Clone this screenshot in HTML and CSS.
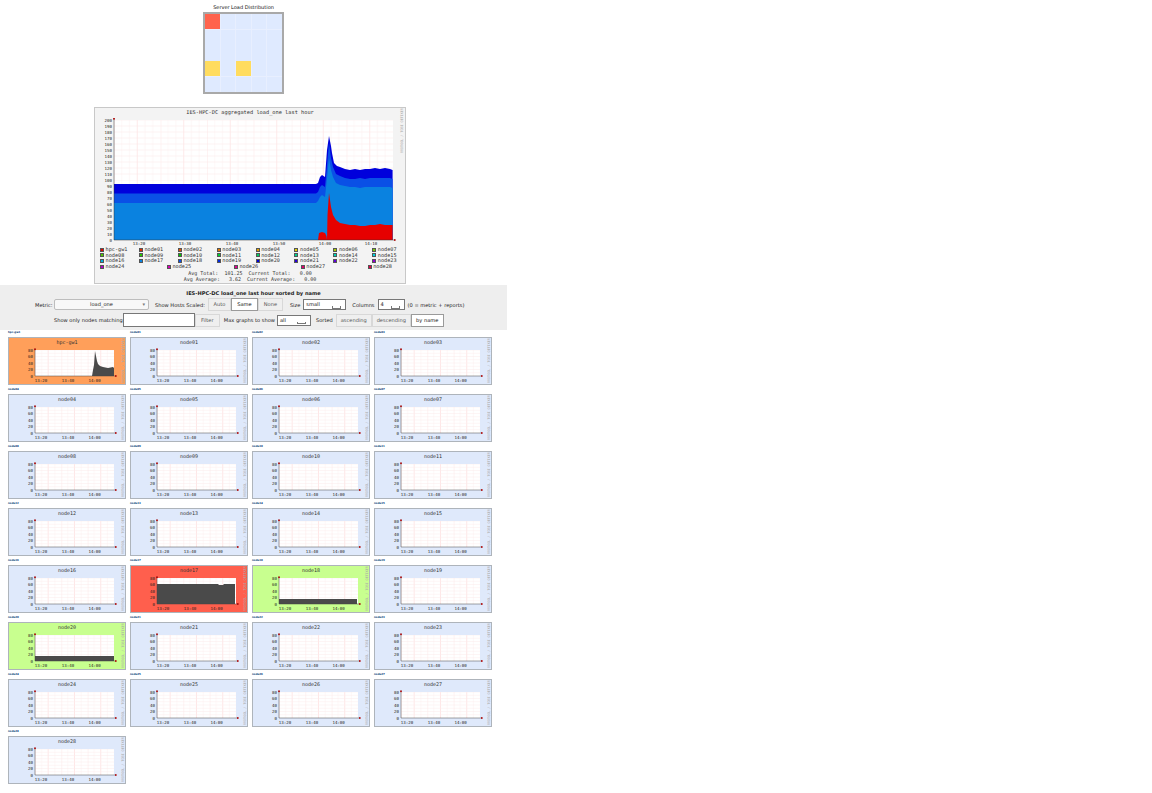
FILE: index.html
```html
<!DOCTYPE html>
<html lang="en">
<head>
    <meta charset="UTF-8">
    <meta name="viewport" content="width=device-width, initial-scale=1.0">
    <title>IES-HPC-DC Cluster Report</title>
    <link rel="stylesheet" href="styles.css">
</head>
<body>
    <svg class="defs" width="0" height="0">
        <defs>
            <pattern id="bigGrid" x="114" y="120" width="46.5" height="60" patternUnits="userSpaceOnUse">
                <path d="M0 0V60M7.75 0V60M15.5 0V60M23.25 0V60M31 0V60M38.75 0V60" stroke="#fbeeee" stroke-width="0.5"/>
                <path d="M0 0V60M23.25 0V60" stroke="#ffdcdc" stroke-width="0.5"/>
                <path d="M0 0H46.5M0 6H46.5M0 12H46.5M0 18H46.5M0 24H46.5M0 30H46.5M0 36H46.5M0 42H46.5M0 48H46.5M0 54H46.5" stroke="#fce8e8" stroke-width="0.5"/>
            </pattern>
            <pattern id="smallGrid" x="27" y="13" width="26.3" height="26" patternUnits="userSpaceOnUse">
                <path d="M0 0V26M6.6 0V26M13.2 0V26M19.8 0V26" stroke="#fbf0f0" stroke-width="0.5"/>
                <path d="M0 0V26M13.2 0V26" stroke="#ffd6d6" stroke-width="0.5"/>
                <path d="M0 0H27M0 3.25H27M0 6.5H27M0 9.75H27M0 13H27M0 16.25H27M0 19.5H27M0 22.75H27" stroke="#fcecec" stroke-width="0.5"/>
            </pattern>
            <g id="smallPlot">
                <rect x="27" y="13" width="79" height="26" fill="#fff"/>
                <rect x="27" y="13" width="79" height="26" fill="url(#smallGrid)"/>
                <text class="tick" x="25" y="14.5" text-anchor="end">80</text>
                <text class="tick" x="25" y="21" text-anchor="end">60</text>
                <text class="tick" x="25" y="27.5" text-anchor="end">40</text>
                <text class="tick" x="25" y="34" text-anchor="end">20</text>
                <text class="tick" x="25" y="40.5" text-anchor="end">0</text>
                <text class="tick" x="33" y="44.5" text-anchor="middle">13:20</text>
                <text class="tick" x="60" y="44.5" text-anchor="middle">13:40</text>
                <text class="tick" x="86.6" y="44.5" text-anchor="middle">14:00</text>
                <text class="side" transform="translate(115.5 46) rotate(-90)">RRDTOOL / TOBI OETIKER</text>
            </g>
            <g id="smallAxes">
                <path d="M27 39H108M27 39V11.5" stroke="#444" stroke-width="0.5" fill="none"/>
                <rect x="26.2" y="11.5" width="1.6" height="1.6" fill="#b00000"/>
                <rect x="107" y="38.2" width="1.6" height="1.6" fill="#b00000"/>
            </g>
        </defs>
    </svg>

    <div class="page">
        <div class="heat-wrap">
            <div class="heat-title">Server Load Distribution</div>
            <div class="heatmap">
                <div class="cell crit"></div><div class="cell"></div><div class="cell"></div><div class="cell"></div><div class="cell"></div>
                <div class="cell"></div><div class="cell"></div><div class="cell"></div><div class="cell"></div><div class="cell"></div>
                <div class="cell"></div><div class="cell"></div><div class="cell"></div><div class="cell"></div><div class="cell"></div>
                <div class="cell warn"></div><div class="cell"></div><div class="cell warn"></div><div class="cell"></div><div class="cell"></div>
                <div class="cell"></div><div class="cell"></div><div class="cell"></div><div class="cell"></div><div class="cell"></div>
            </div>
        </div>

        <div class="big-graph">
            <svg class="big-plot" width="310" height="139" viewBox="95 108 310 139">
                <text class="big-title" x="250" y="113.5" text-anchor="middle">IES-HPC-DC aggregated load_one last hour</text>
                <rect x="114" y="120" width="279" height="120" fill="#fff"/>
                <rect x="114" y="120" width="279" height="120" fill="url(#bigGrid)"/>

                <text class="tick" x="112" y="121.5" text-anchor="end">200</text>
                <text class="tick" x="112" y="127.5" text-anchor="end">190</text>
                <text class="tick" x="112" y="133.5" text-anchor="end">180</text>
                <text class="tick" x="112" y="139.5" text-anchor="end">170</text>
                <text class="tick" x="112" y="145.5" text-anchor="end">160</text>
                <text class="tick" x="112" y="151.5" text-anchor="end">150</text>
                <text class="tick" x="112" y="157.5" text-anchor="end">140</text>
                <text class="tick" x="112" y="163.5" text-anchor="end">130</text>
                <text class="tick" x="112" y="169.5" text-anchor="end">120</text>
                <text class="tick" x="112" y="175.5" text-anchor="end">110</text>
                <text class="tick" x="112" y="181.5" text-anchor="end">100</text>
                <text class="tick" x="112" y="187.5" text-anchor="end">90</text>
                <text class="tick" x="112" y="193.5" text-anchor="end">80</text>
                <text class="tick" x="112" y="199.5" text-anchor="end">70</text>
                <text class="tick" x="112" y="205.5" text-anchor="end">60</text>
                <text class="tick" x="112" y="211.5" text-anchor="end">50</text>
                <text class="tick" x="112" y="217.5" text-anchor="end">40</text>
                <text class="tick" x="112" y="223.5" text-anchor="end">30</text>
                <text class="tick" x="112" y="229.5" text-anchor="end">20</text>
                <text class="tick" x="112" y="235.5" text-anchor="end">10</text>
                <text class="tick" x="112" y="241.5" text-anchor="end">0</text>

                <polygon fill="#0000dc" points="114,240 114,184 316,184 318,183 320,177 322,175 325,177 327,150 329,136 331,146 332,153 334,163 337,166 340,167 345,169 350,170 355,169 360,170 365,169 370,169 375,168 380,169 385,168 390,169 392.6,170 392.6,240"/>
                <polygon fill="#0a50e6" points="114,240 114,193.5 316,193.5 318,192 320,187 322,185 325,187 327,165 329,143 331,158 333,167 336,174 340,176 345,178 350,179 355,179 360,178 365,179 370,178 375,178 380,178 385,178 390,178 392.6,179 392.6,240"/>
                <polygon fill="#0a82e0" points="114,240 114,203 316,203 318,201 320,197 322,195 325,197 327,178 329,158 331,170 333,177 336,183 340,185 345,186 350,187 355,187 360,188 365,187 370,187 375,187 380,187 385,187 390,187 392.6,188 392.6,240"/>
                <polygon fill="#e60000" points="318,240 319,233 322,232 325,233 326.5,236 327,240 327.5,215 329,193 331,207 333,215 336,220 340,223 345,224 350,225 355,225 360,226 365,226 370,225 375,225 380,224 385,225 390,225 392.6,225 392.6,240"/>

                <path d="M114 240H395M114 240V118" stroke="#333" stroke-width="0.5" fill="none"/>
                <rect x="113.2" y="118" width="1.6" height="1.6" fill="#b00000"/>
                <rect x="394" y="239.2" width="1.6" height="1.6" fill="#b00000"/>

                <text class="tick" x="139" y="245" text-anchor="middle">13:20</text>
                <text class="tick" x="185" y="245" text-anchor="middle">13:30</text>
                <text class="tick" x="232" y="245" text-anchor="middle">13:40</text>
                <text class="tick" x="279" y="245" text-anchor="middle">13:50</text>
                <text class="tick" x="325" y="245" text-anchor="middle">14:00</text>
                <text class="tick" x="371" y="245" text-anchor="middle">14:10</text>
                <text class="side" transform="translate(403 153) rotate(-90)">RRDTOOL / TOBI OETIKER</text>
            </svg>

            <div class="legend">
                <span class="key"><i style="background:#e60000"></i>hpc-gw1</span>
                <span class="key"><i style="background:#e02a00"></i>node01</span>
                <span class="key"><i style="background:#e05000"></i>node02</span>
                <span class="key"><i style="background:#e07800"></i>node03</span>
                <span class="key"><i style="background:#e0a000"></i>node04</span>
                <span class="key"><i style="background:#e0d000"></i>node05</span>
                <span class="key"><i style="background:#a8d000"></i>node06</span>
                <span class="key"><i style="background:#78c800"></i>node07</span>
                <span class="key"><i style="background:#50c800"></i>node08</span>
                <span class="key"><i style="background:#28c800"></i>node09</span>
                <span class="key"><i style="background:#00c800"></i>node10</span>
                <span class="key"><i style="background:#00d030"></i>node11</span>
                <span class="key"><i style="background:#00d060"></i>node12</span>
                <span class="key"><i style="background:#00d090"></i>node13</span>
                <span class="key"><i style="background:#00d0b8"></i>node14</span>
                <span class="key"><i style="background:#00d0e0"></i>node15</span>
                <span class="key"><i style="background:#00b0e0"></i>node16</span>
                <span class="key"><i style="background:#0a82e0"></i>node17</span>
                <span class="key"><i style="background:#0a50e6"></i>node18</span>
                <span class="key"><i style="background:#0028e0"></i>node19</span>
                <span class="key"><i style="background:#0000dc"></i>node20</span>
                <span class="key"><i style="background:#2800dc"></i>node21</span>
                <span class="key"><i style="background:#6000dc"></i>node22</span>
                <span class="key"><i style="background:#9000d0"></i>node23</span>
            </div>
            <div class="legend-last">
                <span class="key"><i style="background:#b000c8"></i>node24</span>
                <span class="key"><i style="background:#d800b8"></i>node25</span>
                <span class="key"><i style="background:#e00090"></i>node26</span>
                <span class="key"><i style="background:#e00070"></i>node27</span>
                <span class="key"><i style="background:#e00048"></i>node28</span>
            </div>
            <div class="totals">Avg Total:  101.25  Current Total:   0.00
Avg Average:   3.62  Current Average:   0.00</div>
        </div>

        <div class="filter">
            <div class="filter-title">IES-HPC-DC load_one last hour sorted by name</div>
            <div class="filter-row row-top">
                <label class="metric-label">Metric:</label>
                <div class="metric-select">load_one<span class="arrow">▾</span></div>
                <label>Show Hosts Scaled:</label>
                <div class="btns">
                    <span class="btn btn-auto">Auto</span><span class="btn btn-same on">Same</span><span class="btn btn-none">None</span>
                </div>
                <label class="size-label">Size</label>
                <div class="pick size-pick">small</div>
                <label class="cols-label">Columns</label>
                <div class="pick cols-pick">4</div>
                <span class="hint">(0 = metric + reports)</span>
            </div>
            <div class="filter-row row-bottom">
                <label>Show only nodes matching</label>
                <div class="match-input"></div>
                <span class="btn filter-btn">Filter</span>
                <label class="max-label">Max graphs to show</label>
                <div class="pick max-pick">all</div>
                <label class="sorted-label">Sorted</label>
                <div class="btns sort-btns">
                    <span class="btn btn-asc">ascending</span><span class="btn btn-desc">descending</span><span class="btn btn-name on">by name</span>
                </div>
            </div>
        </div>

        <div class="hosts">
            <div class="host"><span class="stamp">hpc-gw1</span><div class="card down"><h4>hpc-gw1</h4><svg class="chart" viewBox="1 1 116 46"><use href="#smallPlot"/><polygon class="area" points="84,39 85,33 86,28 87,14 88,19 89,24 90,27 92,29 95,30 100,31 105,30 106,31 106,39"/><use href="#smallAxes"/></svg></div></div>
            <div class="host"><span class="stamp">node01</span><div class="card"><h4>node01</h4><svg class="chart" viewBox="1 1 116 46"><use href="#smallPlot"/><use href="#smallAxes"/></svg></div></div>
            <div class="host"><span class="stamp">node02</span><div class="card"><h4>node02</h4><svg class="chart" viewBox="1 1 116 46"><use href="#smallPlot"/><use href="#smallAxes"/></svg></div></div>
            <div class="host"><span class="stamp">node03</span><div class="card"><h4>node03</h4><svg class="chart" viewBox="1 1 116 46"><use href="#smallPlot"/><use href="#smallAxes"/></svg></div></div>
            <div class="host"><span class="stamp">node04</span><div class="card"><h4>node04</h4><svg class="chart" viewBox="1 1 116 46"><use href="#smallPlot"/><use href="#smallAxes"/></svg></div></div>
            <div class="host"><span class="stamp">node05</span><div class="card"><h4>node05</h4><svg class="chart" viewBox="1 1 116 46"><use href="#smallPlot"/><use href="#smallAxes"/></svg></div></div>
            <div class="host"><span class="stamp">node06</span><div class="card"><h4>node06</h4><svg class="chart" viewBox="1 1 116 46"><use href="#smallPlot"/><use href="#smallAxes"/></svg></div></div>
            <div class="host"><span class="stamp">node07</span><div class="card"><h4>node07</h4><svg class="chart" viewBox="1 1 116 46"><use href="#smallPlot"/><use href="#smallAxes"/></svg></div></div>
            <div class="host"><span class="stamp">node08</span><div class="card"><h4>node08</h4><svg class="chart" viewBox="1 1 116 46"><use href="#smallPlot"/><use href="#smallAxes"/></svg></div></div>
            <div class="host"><span class="stamp">node09</span><div class="card"><h4>node09</h4><svg class="chart" viewBox="1 1 116 46"><use href="#smallPlot"/><use href="#smallAxes"/></svg></div></div>
            <div class="host"><span class="stamp">node10</span><div class="card"><h4>node10</h4><svg class="chart" viewBox="1 1 116 46"><use href="#smallPlot"/><use href="#smallAxes"/></svg></div></div>
            <div class="host"><span class="stamp">node11</span><div class="card"><h4>node11</h4><svg class="chart" viewBox="1 1 116 46"><use href="#smallPlot"/><use href="#smallAxes"/></svg></div></div>
            <div class="host"><span class="stamp">node12</span><div class="card"><h4>node12</h4><svg class="chart" viewBox="1 1 116 46"><use href="#smallPlot"/><use href="#smallAxes"/></svg></div></div>
            <div class="host"><span class="stamp">node13</span><div class="card"><h4>node13</h4><svg class="chart" viewBox="1 1 116 46"><use href="#smallPlot"/><use href="#smallAxes"/></svg></div></div>
            <div class="host"><span class="stamp">node14</span><div class="card"><h4>node14</h4><svg class="chart" viewBox="1 1 116 46"><use href="#smallPlot"/><use href="#smallAxes"/></svg></div></div>
            <div class="host"><span class="stamp">node15</span><div class="card"><h4>node15</h4><svg class="chart" viewBox="1 1 116 46"><use href="#smallPlot"/><use href="#smallAxes"/></svg></div></div>
            <div class="host"><span class="stamp">node16</span><div class="card"><h4>node16</h4><svg class="chart" viewBox="1 1 116 46"><use href="#smallPlot"/><use href="#smallAxes"/></svg></div></div>
            <div class="host"><span class="stamp">node17</span><div class="card crit"><h4>node17</h4><svg class="chart" viewBox="1 1 116 46"><use href="#smallPlot"/><polygon class="area" points="27,39 27,19 88,19 89,20 93,20 94,19 105,19 105,39"/><use href="#smallAxes"/></svg></div></div>
            <div class="host"><span class="stamp">node18</span><div class="card ok"><h4>node18</h4><svg class="chart" viewBox="1 1 116 46"><use href="#smallPlot"/><rect class="area" x="27" y="34" width="78" height="5"/><use href="#smallAxes"/></svg></div></div>
            <div class="host"><span class="stamp">node19</span><div class="card"><h4>node19</h4><svg class="chart" viewBox="1 1 116 46"><use href="#smallPlot"/><use href="#smallAxes"/></svg></div></div>
            <div class="host"><span class="stamp">node20</span><div class="card ok"><h4>node20</h4><svg class="chart" viewBox="1 1 116 46"><use href="#smallPlot"/><rect class="area" x="27" y="34" width="79" height="5"/><use href="#smallAxes"/></svg></div></div>
            <div class="host"><span class="stamp">node21</span><div class="card"><h4>node21</h4><svg class="chart" viewBox="1 1 116 46"><use href="#smallPlot"/><use href="#smallAxes"/></svg></div></div>
            <div class="host"><span class="stamp">node22</span><div class="card"><h4>node22</h4><svg class="chart" viewBox="1 1 116 46"><use href="#smallPlot"/><use href="#smallAxes"/></svg></div></div>
            <div class="host"><span class="stamp">node23</span><div class="card"><h4>node23</h4><svg class="chart" viewBox="1 1 116 46"><use href="#smallPlot"/><use href="#smallAxes"/></svg></div></div>
            <div class="host"><span class="stamp">node24</span><div class="card"><h4>node24</h4><svg class="chart" viewBox="1 1 116 46"><use href="#smallPlot"/><use href="#smallAxes"/></svg></div></div>
            <div class="host"><span class="stamp">node25</span><div class="card"><h4>node25</h4><svg class="chart" viewBox="1 1 116 46"><use href="#smallPlot"/><use href="#smallAxes"/></svg></div></div>
            <div class="host"><span class="stamp">node26</span><div class="card"><h4>node26</h4><svg class="chart" viewBox="1 1 116 46"><use href="#smallPlot"/><use href="#smallAxes"/></svg></div></div>
            <div class="host"><span class="stamp">node27</span><div class="card"><h4>node27</h4><svg class="chart" viewBox="1 1 116 46"><use href="#smallPlot"/><use href="#smallAxes"/></svg></div></div>
            <div class="host"><span class="stamp">node28</span><div class="card"><h4>node28</h4><svg class="chart" viewBox="1 1 116 46"><use href="#smallPlot"/><use href="#smallAxes"/></svg></div></div>
        </div>
    </div>
</body>
</html>
```

FILE: styles.css
```css
body {
    margin: 0;
    background-color: #ffffff;
    font-family: 'DejaVu Sans', Verdana, sans-serif;
    color: #222222;
}

.defs {
    position: absolute;
}

.page {
    width: 507px;
}

/* heatmap */
.heat-wrap {
    margin-left: 203px;
    width: 81px;
    padding-top: 5px;
    height: 107px;
    box-sizing: border-box;
}

.heat-title {
    height: 7px;
    margin: 0 -10px;
    text-align: center;
    font-size: 5px;
    line-height: 4px;
    white-space: nowrap;
    color: #111111;
}

.heatmap {
    display: grid;
    grid-template-columns: repeat(5, 1fr);
    grid-template-rows: repeat(5, 1fr);
    width: 81px;
    height: 82px;
    box-sizing: border-box;
    border: 2px solid #a9a9a9;
    background-color: #e8efff;
    gap: 0.6px;
}

.cell {
    background-color: #dfeaff;
}

.cell.crit {
    background-color: #ff634d;
}

.cell.warn {
    background-color: #ffdc5f;
}

/* aggregated graph */
.big-graph {
    width: 312px;
    height: 177px;
    margin-left: 94px;
    margin-bottom: 1px;
    box-sizing: border-box;
    border: 1px solid #c8c8c8;
    background-color: #f3f3f3;
    font-family: 'DejaVu Sans Mono', monospace;
    font-size: 5.2px;
    color: #333333;
}

.big-plot {
    display: block;
}

.big-title {
    font-family: 'DejaVu Sans Mono', monospace;
    font-size: 5.3px;
    fill: #333333;
}

.tick {
    font-family: 'DejaVu Sans Mono', monospace;
    font-size: 4.1px;
    fill: #222222;
}

.side {
    font-family: 'DejaVu Sans Mono', monospace;
    font-size: 3.4px;
    fill: #a8a8a8;
}

.legend {
    display: grid;
    grid-template-columns: repeat(8, 38.9px);
    grid-auto-rows: 5.67px;
    margin: 0 0 0 5px;
    line-height: 5.67px;
}

.legend-last {
    display: flex;
    justify-content: space-between;
    width: 292px;
    height: 5.67px;
    margin-left: 5px;
    line-height: 5.67px;
}

.key {
    display: flex;
    align-items: center;
    gap: 1.6px;
}

.key i {
    display: block;
    width: 4px;
    height: 4px;
    box-sizing: border-box;
    border: 0.5px solid #555555;
}

.totals {
    margin-top: 1.5px;
    text-align: center;
    white-space: pre;
    line-height: 5.4px;
    font-size: 5px;
}

/* filter bar */
.filter {
    height: 45px;
    box-sizing: border-box;
    background-color: #eeeeee;
    font-size: 5.1px;
    color: #222222;
    padding-top: 6px;
}

.filter-title {
    text-align: center;
    font-weight: bold;
    line-height: 5px;
    height: 8px;
}

.filter-row {
    display: flex;
    align-items: center;
    white-space: nowrap;
}

.row-top {
    height: 11px;
    padding-left: 35px;
}

.row-bottom {
    height: 14px;
    margin-top: 3px;
    padding-left: 54px;
}

.metric-label {
    width: 19px;
}

.metric-select {
    position: relative;
    width: 95px;
    height: 11px;
    box-sizing: border-box;
    margin-right: 6px;
    border: 1px solid #bdbdbd;
    border-radius: 2px;
    background-color: #f8f8f8;
    text-align: center;
    line-height: 9px;
}

.arrow {
    position: absolute;
    right: 3px;
    top: 0;
    color: #777777;
}

.btns {
    display: flex;
    margin-left: 3px;
}

.btn {
    display: block;
    box-sizing: border-box;
    height: 13px;
    line-height: 11px;
    border: 1px solid #d8d8d8;
    background-color: #efefef;
    color: #555555;
    text-align: center;
}

.btn.on {
    background-color: #ffffff;
    color: #111111;
    border-color: #9a9a9a;
}

.btn-auto {
    width: 23px;
}

.btn-same {
    width: 27px;
}

.btn-none {
    width: 25px;
}

.btn-asc {
    width: 36px;
}

.btn-desc {
    width: 39px;
}

.btn-name {
    width: 33px;
}

.pick {
    position: relative;
    box-sizing: border-box;
    height: 11px;
    padding-left: 2px;
    border: 1px solid #777777;
    background-color: #ffffff;
    line-height: 9px;
    color: #111111;
}

.pick::after {
    content: "";
    position: absolute;
    right: 4px;
    bottom: 0.5px;
    width: 7px;
    height: 1.5px;
    border: 0.5px solid #777777;
    border-top: none;
}

.size-label {
    margin-left: 7px;
}

.size-pick {
    width: 43px;
    margin-left: 3px;
}

.cols-label {
    margin-left: 6px;
}

.cols-pick {
    width: 27px;
    margin-left: 3px;
}

.hint {
    margin-left: 3px;
}

.match-input {
    width: 72px;
    height: 14px;
    box-sizing: border-box;
    border: 1px solid #777777;
    background-color: #ffffff;
}

.filter-btn {
    width: 25px;
}

.max-label {
    margin-left: 4px;
}

.max-pick {
    width: 34px;
    margin-left: 2px;
}

.sorted-label {
    margin-left: 5px;
}

.sort-btns {
    margin-left: 3px;
}

/* host cards */
.hosts {
    display: grid;
    grid-template-columns: repeat(4, 118px);
    column-gap: 4px;
    padding-left: 8px;
}

.host {
    display: flex;
    flex-direction: column;
    height: 57px;
}

.stamp {
    display: block;
    height: 6px;
    margin-top: 1px;
    font-size: 2.6px;
    line-height: 3px;
    font-weight: bold;
    color: #0a3c78;
}

.card {
    width: 118px;
    height: 48px;
    box-sizing: border-box;
    border: 1px solid #aeb4bb;
    background-color: #dfe9fb;
}

.card.down {
    background-color: #ff9f5a;
}

.card.crit {
    background-color: #ff5f4d;
}

.card.ok {
    background-color: #c8ff8f;
}

.card h4 {
    margin: 0;
    height: 0;
    font-family: 'DejaVu Sans Mono', monospace;
    font-size: 5px;
    font-weight: normal;
    line-height: 9px;
    text-align: center;
    color: #333333;
}

.chart {
    display: block;
    width: 116px;
    height: 46px;
}

.area {
    fill: #4a4a4a;
}
```
